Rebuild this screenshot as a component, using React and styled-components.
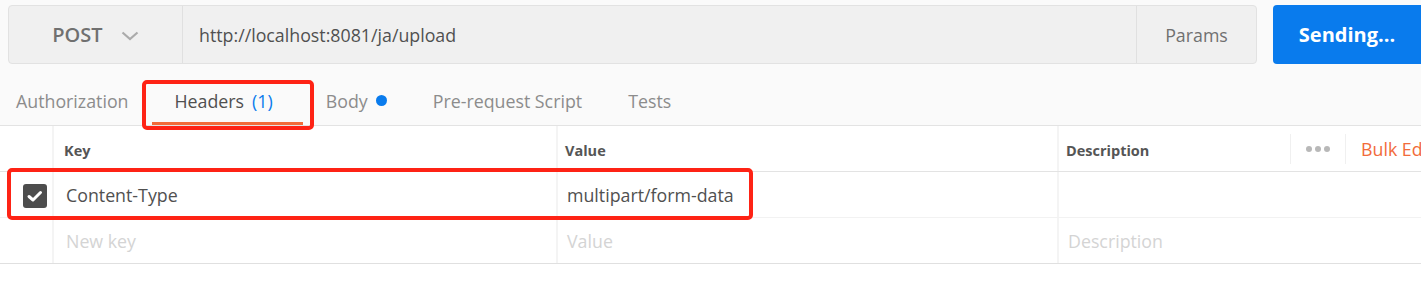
import React from "react";
import styled, { createGlobalStyle } from "styled-components";

const GlobalStyle = createGlobalStyle`
  body {
    margin: 0;
    background: #ffffff;
    font-family: "Open Sans", "Noto Sans", sans-serif;
  }
`;

const tabs = [
  { label: "Authorization" },
  { label: "Headers", count: 1, active: true },
  { label: "Body", dot: true },
  { label: "Pre-request Script" },
  { label: "Tests" },
];

const columns = ["Key", "Value", "Description"];

const rows = [
  { checked: true, key: "Content-Type", value: "multipart/form-data", description: "" },
  { placeholder: true, key: "New key", value: "Value", description: "Description" },
];

export default function App() {
  return (
    <Page>
      <GlobalStyle />
      <TopArea>
        <RequestRow>
          <RequestBar>
            <MethodSelect>
              <span>POST</span>
              <svg width="18" height="10" viewBox="0 0 18 10">
                <path d="M1.5 1.5 L9 8 L16.5 1.5" fill="none" stroke="#ababab" strokeWidth="2.2" />
              </svg>
            </MethodSelect>
            <UrlField>http://localhost:8081/ja/upload</UrlField>
            <ParamsButton>Params</ParamsButton>
          </RequestBar>
          <SendButton>Sending...</SendButton>
        </RequestRow>
        <Tabs>
          {tabs.map((t) => (
            <Tab key={t.label} $active={t.active}>
              {t.label}
              {t.count && <Count>({t.count})</Count>}
              {t.dot && <Dot />}
            </Tab>
          ))}
        </Tabs>
      </TopArea>

      <Table>
        <HeaderRow>
          <Gutter />
          <HeadCell $first>{columns[0]}</HeadCell>
          <HeadCell>{columns[1]}</HeadCell>
          <HeadCell>
            <span>{columns[2]}</span>
            <Actions>
              <MoreButton>
                <i /><i /><i />
              </MoreButton>
              <BulkEdit>Bulk Edit</BulkEdit>
            </Actions>
          </HeadCell>
        </HeaderRow>
        {rows.map((r, i) => (
          <Row key={i} $last={i === rows.length - 1}>
            <Gutter>
              {r.checked && (
                <Checkbox>
                  <svg width="24" height="24" viewBox="0 0 24 24">
                    <path d="M6 12.5 L10 16 L17.5 8.5" fill="none" stroke="#fff" strokeWidth="3" strokeLinecap="round" strokeLinejoin="round" />
                  </svg>
                </Checkbox>
              )}
            </Gutter>
            <Cell $first $placeholder={r.placeholder}>{r.key}</Cell>
            <Cell $placeholder={r.placeholder}>{r.value}</Cell>
            <Cell $placeholder={r.placeholder}>{r.description}</Cell>
          </Row>
        ))}
      </Table>

      <Highlight style={{ left: 142, top: 80, width: 172, height: 50 }} />
      <Highlight style={{ left: 7, top: 168, width: 746, height: 52 }} />
    </Page>
  );
}

const Page = styled.div`
  position: relative;
  width: 1421px;
  height: 304px;
  overflow: hidden;
  background: #ffffff;
`;

const TopArea = styled.div`
  background: #fafafa;
`;

const RequestRow = styled.div`
  display: flex;
  gap: 16px;
  height: 59px;
  padding: 5px 0 0 8px;
`;

const RequestBar = styled.div`
  flex: 1;
  display: flex;
  background: #f0f0f0;
  border: 1px solid #e2e2e2;
  border-radius: 4px;
`;

const MethodSelect = styled.div`
  width: 173px;
  display: flex;
  align-items: center;
  justify-content: center;
  gap: 18px;
  border-right: 1px solid #e0e0e0;
  font-size: 20px;
  font-weight: 600;
  color: #707070;
  svg {
    margin-top: 2px;
  }
`;

const UrlField = styled.div`
  flex: 1;
  display: flex;
  align-items: center;
  padding-left: 16px;
  font-size: 17.8px;
  color: #505050;
`;

const ParamsButton = styled.div`
  width: 119px;
  display: flex;
  align-items: center;
  justify-content: center;
  border-left: 1px solid #e0e0e0;
  font-size: 17.8px;
  color: #707070;
`;

const SendButton = styled.div`
  width: 148px;
  display: flex;
  align-items: center;
  justify-content: center;
  background: #097bed;
  border-radius: 4px 0 0 4px;
  color: #ffffff;
  font-size: 20px;
  font-weight: 700;
`;

const Tabs = styled.div`
  display: flex;
  height: 61px;
  border-bottom: 1px solid #e3e3e3;
`;

const Tab = styled.div`
  display: flex;
  align-items: center;
  padding: 15px 23px 0;
  border-bottom: 3px solid ${(p) => (p.$active ? "#f26b3a" : "transparent")};
  font-size: 17.8px;
  color: ${(p) => (p.$active ? "#505050" : "#8c8c8c")};
  &:first-child {
    padding-left: 16px;
  }
  &:nth-child(2) {
    padding-right: 30px;
  }
`;

const Count = styled.span`
  margin-left: 8px;
  color: #097bed;
`;

const Dot = styled.span`
  width: 11px;
  height: 11px;
  margin-left: 8px;
  border-radius: 50%;
  background: #097bed;
`;

const Table = styled.div`
  background: #ffffff;
`;

const grid = `
  display: grid;
  grid-template-columns: 52px 504px 501px 1fr;
`;

const HeaderRow = styled.div`
  ${grid}
  height: 45px;
  border-bottom: 1px solid #e3e3e3;
`;

const Row = styled.div`
  ${grid}
  height: 45px;
  border-bottom: 1px solid ${(p) => (p.$last ? "#e0e0e0" : "#f2f2f2")};
`;

const Gutter = styled.div`
  display: flex;
  align-items: center;
  padding-left: 23px;
`;

const HeadCell = styled.div`
  display: flex;
  align-items: center;
  justify-content: space-between;
  min-width: 0;
  padding-left: ${(p) => (p.$first ? "10px" : "7px")};
  padding-top: 3px;
  border-left: 2px solid #f4f4f4;
  font-size: 14.5px;
  font-weight: 700;
  color: #555555;
`;

const Cell = styled.div`
  display: flex;
  align-items: center;
  padding-left: ${(p) => (p.$first ? "12px" : "9px")};
  border-left: 2px solid #f4f4f4;
  font-size: 17.8px;
  color: ${(p) => (p.$placeholder ? "#d4d4d4" : "#505050")};
`;

const Actions = styled.div`
  display: flex;
  align-items: center;
  flex-shrink: 0;
  width: 131px;
  height: 100%;
  margin-top: -3px;
`;

const MoreButton = styled.div`
  display: flex;
  flex-shrink: 0;
  align-items: center;
  justify-content: center;
  gap: 3px;
  width: 54px;
  height: 30px;
  border-left: 1px solid #f0f0f0;
  border-right: 1px solid #f0f0f0;
  i {
    width: 6px;
    height: 6px;
    border-radius: 50%;
    background: #b8b8b8;
  }
`;

const BulkEdit = styled.div`
  flex-shrink: 0;
  padding-left: 15px;
  font-size: 17.8px;
  font-weight: 400;
  color: #f26b3a;
  white-space: nowrap;
`;

const Checkbox = styled.div`
  width: 24px;
  height: 24px;
  margin-top: 3px;
  border-radius: 3px;
  background: #4d4d4d;
  svg {
    display: block;
  }
`;

const Highlight = styled.div`
  position: absolute;
  box-sizing: border-box;
  border: 4px solid #fe2315;
  border-radius: 5px;
  pointer-events: none;
`;
